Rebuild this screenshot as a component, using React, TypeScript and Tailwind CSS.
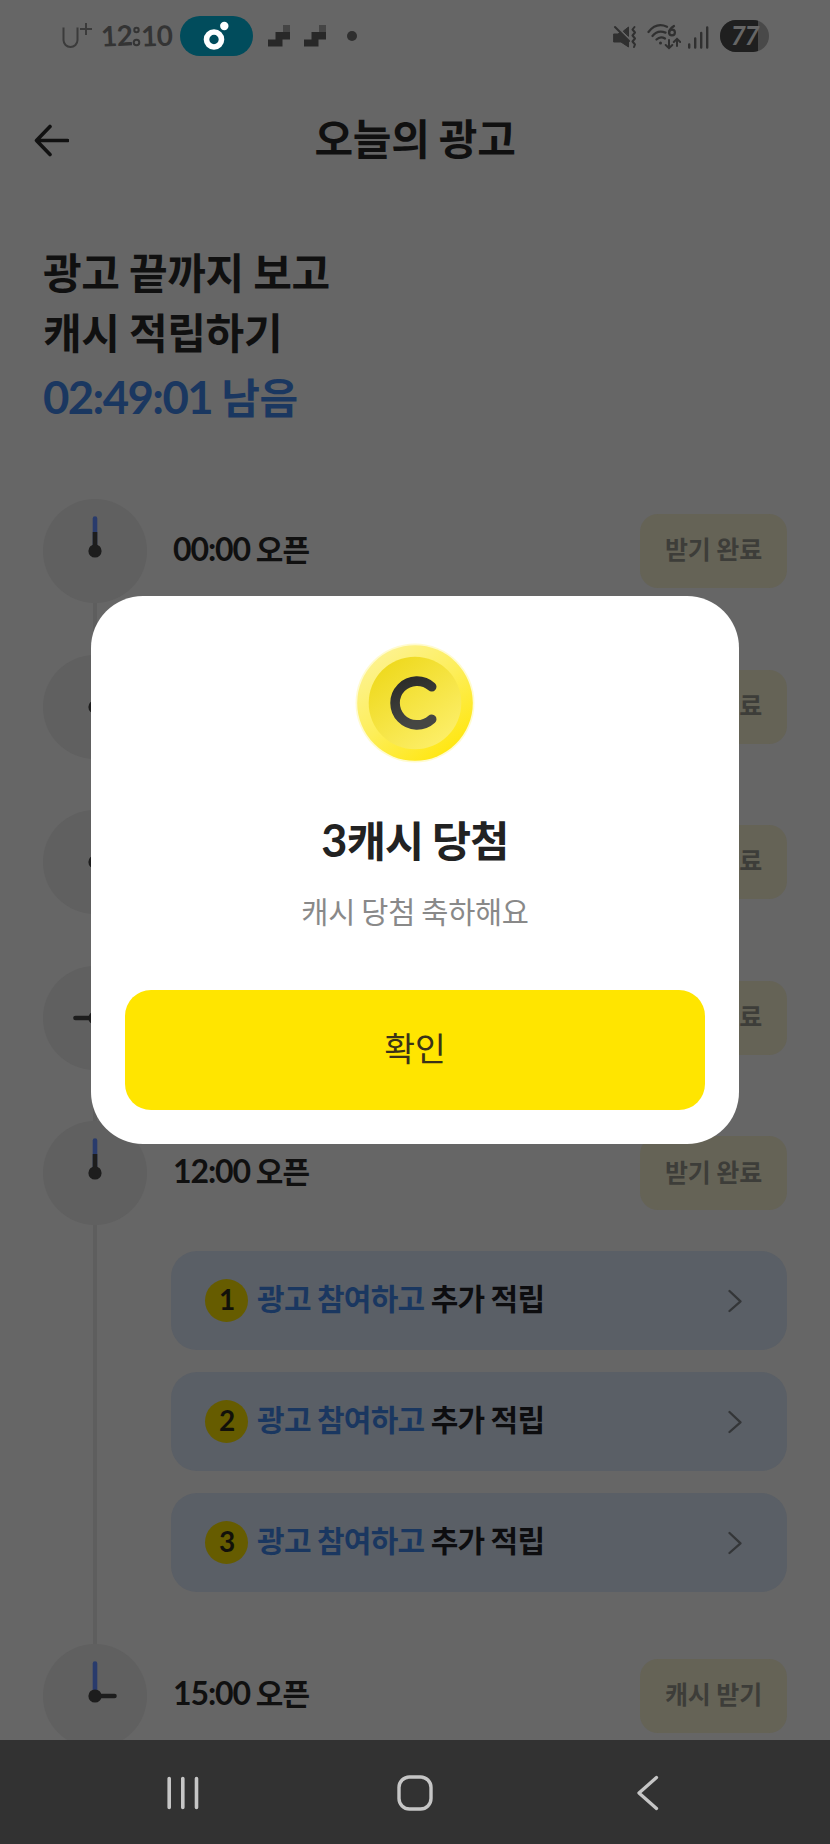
import React from "react";

type Hand = "up" | "right" | "down" | "left";

interface Slot {
  time: string;
  button: string;
  hand: Hand;
}

const slots: Slot[] = [
  { time: "00:00", button: "받기 완료", hand: "up" },
  { time: "03:00", button: "받기 완료", hand: "right" },
  { time: "06:00", button: "받기 완료", hand: "down" },
  { time: "09:00", button: "받기 완료", hand: "left" },
  { time: "12:00", button: "받기 완료", hand: "up" },
  { time: "15:00", button: "캐시 받기", hand: "right" },
];

const hourEnd: Record<Hand, [number, number]> = {
  up: [52, 33],
  right: [71.5, 52],
  down: [52, 71.5],
  left: [32.5, 52],
};

function StatusBar() {
  return (
    <div className="flex h-[72px] shrink-0 items-center px-[61px]">
      <svg width="31" height="26" viewBox="0 0 31 26" fill="none" stroke="#3b3b3b" strokeWidth="2" className="shrink-0">
        <path d="M2.500 4.500v12.500a7 7 0 0 0 14 0V4.500M25 0v12M19 6h12" />
      </svg>
      <div className="ml-[9px] flex h-[28px] w-[72px] shrink-0 -translate-y-[1px] items-center font-['Lato'] text-[28px] font-bold leading-[28px] tracking-[-0.600px] text-[#343434]">
        <span className="-rotate-3">12</span>
        <span className="relative w-[9px] text-center">
          :
          <svg width="9" height="26" viewBox="0 0 9 26" className="absolute left-0 top-[2px]" fill="#666" stroke="#343434" strokeWidth="2">
            <rect width="9" height="26" stroke="none" />
            <circle cx="4.500" cy="7" r="2.200" />
            <circle cx="4.500" cy="19.500" r="2.800" />
          </svg>
        </span>
        <span className="-rotate-2">10</span>
      </div>
      <div className="ml-[7px] flex h-10 w-[73px] shrink-0 items-center justify-center rounded-full bg-[#014c5c]">
        <svg width="28" height="32" viewBox="0 0 28 32" className="-translate-x-[1px]">
          <circle cx="12" cy="19.500" r="7.500" fill="none" stroke="#fff" strokeWidth="5.600" />
          <circle cx="22.300" cy="6" r="4.200" fill="#fff" />
        </svg>
      </div>
      <div className="ml-[15px] flex gap-[14px]">
        {[0, 1].map((i) => (
          <svg key={i} width="22" height="22" viewBox="0 0 22 22">
            <path d="M15 0h7v7h-7z" fill="#454545" />
            <path d="M7.500 7H22v7.500h-7.500V21.500H0V14.500h7.500z" fill="#282828" />
          </svg>
        ))}
      </div>
      <div className="ml-[21px] h-[10px] w-[10px] rounded-full bg-[#2f2f2f]" />
      <div className="ml-auto flex items-center">
        <svg width="24" height="24" viewBox="0 0 24 24" fill="none" stroke="#303030" strokeWidth="2" strokeLinecap="round" strokeLinejoin="round" className="translate-x-[2px] translate-y-[1px]">
          <path d="M1 9h4l2-1.500L15.500 16v6L8 17H1z" fill="#303030" strokeWidth="1" />
          <path d="M10.500 6l5-4v9z" fill="#303030" strokeWidth="1" />
          <path d="M2 2l14 14" />
          <path d="M21.500 2l-2 2.500 2.500 3-2.500 3 2.500 3-2.500 3 2.500 3-1 2.500" />
        </svg>
        <svg width="34" height="26" viewBox="0 0 34 26" className="ml-[11px] translate-x-[1px] translate-y-[1px]" fill="none" stroke="#303030" strokeWidth="2.200" strokeLinecap="round">
          <path d="M1.500 8C7 1 14 0 20 2.800M5.500 12C9 7.500 14 7 18.500 8.600M9.500 15.500c2.500-2.500 6-2.500 8.500-1" />
          <path d="M27 2c-3 2-5 4.500-5 7" />
          <circle cx="25" cy="8.500" r="2.900" />
          <circle cx="13.500" cy="19" r="1.500" fill="#303030" stroke="none" />
          <path d="M22 16v8m-3.300-3l3.300 3.200 3.300-3.200M30 22v-7m-3.200 3l3.200-3.200 3.200 3.200" strokeWidth="2" />
        </svg>
        <svg width="22" height="24" viewBox="0 0 22 24" className="ml-[7px] translate-y-[1px]" stroke="#303030" strokeWidth="2.400" strokeLinecap="round">
          <path d="M2.200 19.500V22.500M8.200 13.500V22.500M14.200 8V22.500M20.200 2.500V22.500" />
        </svg>
        <div className="ml-[11px] flex h-8 w-[49px] items-center overflow-hidden rounded-full bg-[#494949]">
          <div className="flex h-8 w-[38px] items-center justify-end bg-[#1f1f1f] font-['Lato'] text-[26px] font-bold italic leading-none tracking-[-1.500px] text-[#666]">
            <span className="-translate-y-[1px]">77</span>
          </div>
        </div>
      </div>
    </div>
  );
}

function Clock({ hand }: { hand: Hand }) {
  const [x, y] = hourEnd[hand];
  return (
    <svg width="104" height="104" viewBox="0 0 104 104" className="shrink-0">
      <circle cx="52" cy="52" r="52" fill="#606060" />
      <path d="M52 19.500V52" stroke="#293b6c" strokeWidth="4.600" strokeLinecap="round" />
      <path d={`M52 52L${x} ${y}`} stroke="#1d1d1d" strokeWidth="4.600" strokeLinecap={hand === "up" ? "butt" : "round"} />
      <circle cx="52" cy="52" r="6.600" fill="#1d1d1d" />
    </svg>
  );
}

function BonusCard({ index }: { index: number }) {
  return (
    <div className="flex h-[99.500px] items-center rounded-[26px] bg-[#5a5f66] pl-[34px] pr-[45px]">
      <div className="flex h-[43px] w-[43px] items-center justify-center rounded-full bg-[#665c00] font-['Lato'] text-[28px] font-bold leading-none text-[#12110a]">
        <span className="-translate-y-[2px] translate-x-[0.500px]">{index}</span>
      </div>
      <p className="ml-[9px] -translate-y-[4px] whitespace-nowrap text-[30px] font-bold leading-[44px] tracking-[-0.700px] text-[#0d0d0f]">
        <span className="text-[#1a3760]">광고 참여하고</span> 추가 적립
      </p>
      <svg width="14" height="24" viewBox="0 0 14 24" className="ml-auto" fill="none" stroke="#343638" strokeWidth="2.300" strokeLinecap="round" strokeLinejoin="round">
        <path d="M1.500 2L12.500 12.300 1.500 22" />
      </svg>
    </div>
  );
}

function TimelineRow({ slot, last }: { slot: Slot; last: boolean }) {
  const open = slot.time === "12:00";
  return (
    <div className="flex">
      <div className="flex w-[104px] flex-col items-center">
        <Clock hand={slot.hand} />
        {!last && <div className="w-[4px] grow bg-[#5e5e5e]" />}
      </div>
      <div className={open ? "flex h-[522.500px] grow flex-col" : "flex h-[155.600px] grow flex-col"}>
        <div className="flex h-[104px] items-center justify-between pl-[26px]">
          <p className="-translate-y-[3px] whitespace-nowrap text-[30px] font-semibold leading-[44px] tracking-[-1px] text-[#101010]">
            <span className="font-['Lato'] text-[32px] font-bold tracking-[-1.100px]">{slot.time}</span> 오픈
          </p>
          <div className="flex h-[74px] w-[147px] items-center justify-center rounded-[18px] bg-[#656356] text-[25px] font-bold tracking-[-0.100px] text-[#3d3d39]">
            <span className="-translate-y-[2px]">{slot.button}</span>
          </div>
        </div>
        {open && (
          <div className="flex flex-col gap-[21.500px] pl-[24px] pt-[25.500px]">
            <BonusCard index={1} />
            <BonusCard index={2} />
            <BonusCard index={3} />
          </div>
        )}
      </div>
    </div>
  );
}

function Coin() {
  return (
    <svg width="122" height="122" viewBox="0 0 122 122">
      <defs>
        <linearGradient id="rim" x1="0.200" y1="0.100" x2="0.800" y2="0.900">
          <stop offset="0" stopColor="#fdf28c" />
          <stop offset="0.500" stopColor="#fdee58" />
          <stop offset="1" stopColor="#ffe714" />
        </linearGradient>
        <linearGradient id="face" x1="0.200" y1="0.100" x2="0.800" y2="0.900">
          <stop offset="0" stopColor="#efda20" />
          <stop offset="1" stopColor="#fcee66" />
        </linearGradient>
        <linearGradient id="letter" x1="0" y1="0" x2="0.300" y2="1">
          <stop offset="0" stopColor="#2b2b28" />
          <stop offset="1" stopColor="#454643" />
        </linearGradient>
      </defs>
      <circle cx="61" cy="61" r="59.500" fill="#fff9b0" opacity="0.600" />
      <circle cx="61" cy="61" r="57.800" fill="url(#rim)" />
      <circle cx="61" cy="61" r="46.300" fill="url(#face)" />
      <path d="M77.700 44.800A21.900 21.900 0 1 0 77.700 77.200" fill="none" stroke="url(#letter)" strokeWidth="9.600" strokeLinecap="round" />
    </svg>
  );
}

function RewardDialog() {
  return (
    <div className="absolute inset-x-0 top-0 flex h-[1740px] items-center justify-center">
      <div className="flex h-[548px] w-[648px] flex-col items-center rounded-[52px] bg-white px-[34px] pt-[46px] pb-[34px]">
        <Coin />
        <h2 className="mt-[44px] whitespace-nowrap text-[42.500px] font-bold leading-[62px] tracking-[-0.800px] text-[#222]">
          <span className="font-['Lato'] text-[45px]">3</span>캐시 당첨
        </h2>
        <p className="mt-[18px] whitespace-nowrap text-[29.500px] leading-[42px] tracking-[-0.300px] text-[#898989]">캐시 당첨 축하해요</p>
        <button className="mt-auto flex h-[120px] w-full items-center justify-center rounded-[26px] bg-[#ffe500] text-[33.500px] leading-[48px] text-[#3a3218]">
          <span className="-translate-y-[3px]">확인</span>
        </button>
      </div>
    </div>
  );
}

function NavigationBar() {
  return (
    <div className="grid h-[104px] shrink-0 grid-cols-[1fr_36px_1fr] items-center bg-[#323232] pl-[167px] pr-[171px] pt-[2px]">
      <svg width="32" height="34" viewBox="0 0 32 34" stroke="#c6c6c6" strokeWidth="3.600" strokeLinecap="round">
        <path d="M2.200 2.500V31.500M15.800 2.500V31.500M29.500 2.500V31.500" />
      </svg>
      <svg width="36" height="36" viewBox="0 0 36 36" fill="none" stroke="#c6c6c6" strokeWidth="3.400" className="translate-x-[2px]">
        <rect x="2" y="2" width="32" height="32" rx="10.500" />
      </svg>
      <svg width="22" height="36" viewBox="0 0 22 36" fill="none" stroke="#c6c6c6" strokeWidth="3.300" strokeLinecap="round" strokeLinejoin="round" className="justify-self-end">
        <path d="M19.500 2.500L2 18 19.500 33.500" />
      </svg>
    </div>
  );
}

export default function App() {
  return (
    <div className="relative flex h-[1844px] w-[830px] flex-col overflow-hidden bg-[#666] font-['Noto_Sans_CJK_KR',sans-serif]">
      <div className="flex h-[1740px] flex-col overflow-hidden">
        <StatusBar />
        <header className="flex h-[136px] shrink-0 items-center px-[33px]">
          <svg width="36" height="34" viewBox="0 0 36 34" fill="none" stroke="#111" strokeWidth="3.600" strokeLinecap="round" strokeLinejoin="round" className="translate-y-[0.500px]">
            <path d="M17 3L3.500 17l13.500 14M3.500 17h31" />
          </svg>
          <h1 className="grow -translate-y-[3.500px] pr-[36px] text-center text-[42px] font-bold leading-[60px] tracking-[-0.300px] text-[#101010]">오늘의 광고</h1>
        </header>
        <div className="h-[291px] shrink-0 whitespace-nowrap pl-[43px] pt-[33px] text-[42px] font-bold leading-[60px] tracking-[-0.300px] text-[#101010]">
          <p>광고 끝까지 보고</p>
          <p>캐시 적립하기</p>
          <p className="mt-[5px] tracking-[-0.300px] text-[#1a3760]">
            <span className="font-['Lato'] text-[45.500px] tracking-[-1.600px]">02:49:01</span> 남음
          </p>
        </div>
        <div className="flex flex-col px-[43px]">
          {slots.map((slot, i) => (
            <TimelineRow key={slot.time} slot={slot} last={i === slots.length - 1} />
          ))}
        </div>
      </div>
      <NavigationBar />
      <RewardDialog />
    </div>
  );
}
